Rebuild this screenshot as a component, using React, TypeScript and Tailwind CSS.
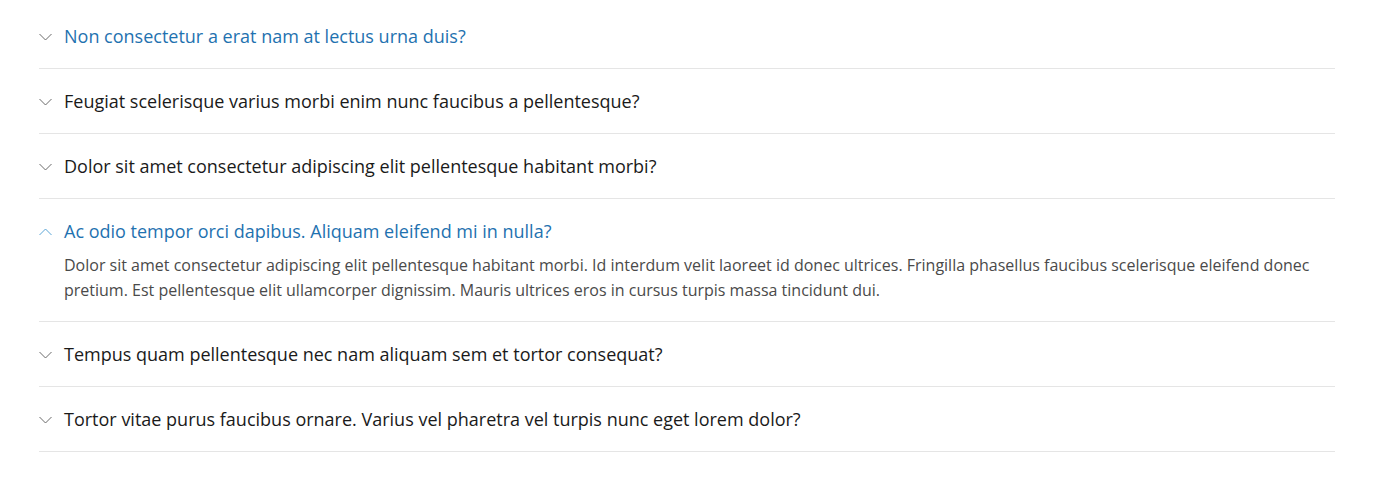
import React, { useState } from "react";

const items = [
  { q: "Non consectetur a erat nam at lectus urna duis?", a: "" },
  { q: "Feugiat scelerisque varius morbi enim nunc faucibus a pellentesque?", a: "" },
  { q: "Dolor sit amet consectetur adipiscing elit pellentesque habitant morbi?", a: "" },
  {
    q: "Ac odio tempor orci dapibus. Aliquam eleifend mi in nulla?",
    a: "Dolor sit amet consectetur adipiscing elit pellentesque habitant morbi. Id interdum velit laoreet id donec ultrices. Fringilla phasellus faucibus scelerisque eleifend donec pretium. Est pellentesque elit ullamcorper dignissim. Mauris ultrices eros in cursus turpis massa tincidunt dui.",
  },
  { q: "Tempus quam pellentesque nec nam aliquam sem et tortor consequat?", a: "" },
  { q: "Tortor vitae purus faucibus ornare. Varius vel pharetra vel turpis nunc eget lorem dolor?", a: "" },
];

function Chevron({ up, color }: { up: boolean; color: string }) {
  return (
    <svg width="13" height="8" viewBox="0 0 13 8" fill="none" className="shrink-0">
      <path
        d={up ? "M0.5 7L6.5 1L12.5 7" : "M0.5 1L6.5 7L12.5 1"}
        stroke={color}
        strokeWidth="1"
      />
    </svg>
  );
}

export default function App() {
  const [open, setOpen] = useState(3);
  return (
    <div className="w-[1394px] h-[493px] bg-white" style={{ fontFamily: '"Open Sans", sans-serif' }}>
      <div className="pl-[39px] pr-[59px] pt-[4px]">
        {items.map((it, i) => {
          const isOpen = open === i;
          const blue = i === 0 || isOpen;
          return (
            <div key={i} className="border-b border-[#e5e5e5]">
              <button
                onClick={() => setOpen(isOpen ? -1 : i)}
                className={`w-full flex items-center text-left pt-[19px] cursor-pointer ${isOpen ? "pb-[8px]" : "pb-[18px]"}`}
              >
                <span className="w-[25px] flex items-center">
                  <Chevron up={isOpen} color={isOpen ? "#5aa5d6" : "#6b6b6b"} />
                </span>
                <span
                  className={`text-[18px] leading-[27px] ${blue ? "text-[#1f72b0]" : "text-[#1a1a1a]"}`}
                >
                  {it.q}
                </span>
              </button>
              {isOpen && (
                <div className="pl-[25px] pb-[18px] pr-[20px] text-[16px] leading-[25px] text-[#4a4a4a]">
                  {it.a}
                </div>
              )}
            </div>
          );
        })}
      </div>
    </div>
  );
}
